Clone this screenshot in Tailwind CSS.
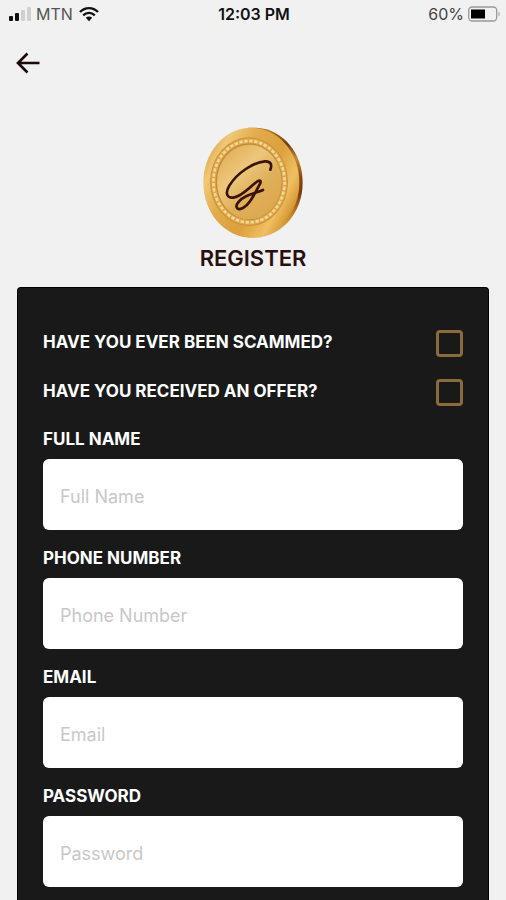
<!DOCTYPE html>
<html lang="en">
<head>
  <meta charset="UTF-8">
  <meta name="viewport" content="width=device-width, initial-scale=1.0">
  <title>Register</title>
  <script src="https://cdn.jsdelivr.net/npm/@tailwindcss/browser@4"></script>
</head>
<body class="bg-[#f1f1f1] min-h-screen flex flex-col font-['Inter',sans-serif] text-[#111111]">
  <!-- Status bar -->
  <div class="grid grid-cols-3 items-center h-7 pl-2 pr-1.5 text-base">
    <div class="flex items-center gap-1 text-[#555555]">
      <svg class="w-6 h-4" viewBox="0 0 24 16" aria-hidden="true">
        <rect x="1" y="10" width="4" height="5" rx="1" fill="#111"/>
        <rect x="7" y="7" width="4" height="8" rx="1" fill="#111"/>
        <rect x="13" y="4" width="4" height="11" rx="1" fill="#d0d0d0"/>
        <rect x="19" y="1" width="4" height="14" rx="1" fill="#d0d0d0"/>
      </svg>
      <span>MTN</span>
      <svg class="w-6 h-4" viewBox="-1 0 22 16" fill="none" stroke="#111" stroke-width="2.4" aria-hidden="true">
        <path d="M1 6C6 .8 14 .8 19 6"/>
        <path d="M4.2 9.4C7.6 6 12.4 6 15.8 9.4"/>
        <path d="M6.8 11.8C8.6 10.1 11.4 10.1 13.2 11.8L10 15.2Z" fill="#111" stroke="none"/>
      </svg>
    </div>
    <div class="text-center font-semibold">12:03 PM</div>
    <div class="flex items-center justify-end gap-1 text-[#444444]">
      <span>60%</span>
      <svg class="w-8 h-4" viewBox="0 0 32 16" aria-hidden="true">
        <rect x=".7" y="1" width="28" height="14" rx="3.5" fill="none" stroke="#999" stroke-width="1.3"/>
        <rect x="3" y="3.5" width="14" height="9" fill="#000"/>
        <path d="M30.5 5.5C32 6.5 32 9.5 30.5 10.5Z" fill="#999"/>
      </svg>
    </div>
  </div>

  <header class="px-4 pt-5">
    <button type="button" aria-label="Back" class="block">
      <svg class="w-6 h-8" viewBox="0 0 24 32" fill="none" stroke="#1a0a0a" stroke-width="2.7">
        <path d="M23.5 15H2M11.5 5.5L2 15L11.5 24.5"/>
      </svg>
    </button>
  </header>

  <!-- Logo -->
  <div class="flex flex-col items-center pt-[47px]">
    <svg class="w-[100px] h-[111px]" viewBox="40 35 300 333" aria-hidden="true">
      <defs>
        <linearGradient id="edge" x1="0" y1="0" x2="0" y2="1">
          <stop offset="0" stop-color="#b9771f"/>
          <stop offset=".15" stop-color="#6e3b10"/>
          <stop offset=".28" stop-color="#c58a34"/>
          <stop offset=".45" stop-color="#8a4a12"/>
          <stop offset=".6" stop-color="#7a3a0c"/>
          <stop offset=".8" stop-color="#c98528"/>
          <stop offset="1" stop-color="#e9bc5c"/>
        </linearGradient>
        <linearGradient id="face" x1="0" y1=".2" x2="1" y2=".8">
          <stop offset="0" stop-color="#d99e3a"/>
          <stop offset=".14" stop-color="#f0c878"/>
          <stop offset=".35" stop-color="#e2ab4c"/>
          <stop offset=".6" stop-color="#dca03c"/>
          <stop offset=".8" stop-color="#efc063"/>
          <stop offset=".9" stop-color="#dc9f3c"/>
          <stop offset="1" stop-color="#a8651b"/>
        </linearGradient>
        <linearGradient id="inner" x1=".1" y1="0" x2=".9" y2="1">
          <stop offset="0" stop-color="#e0ab50"/>
          <stop offset=".35" stop-color="#ecc77c"/>
          <stop offset=".6" stop-color="#dfb05a"/>
          <stop offset="1" stop-color="#dba64a"/>
        </linearGradient>
      </defs>
      <path d="M175 37H200C280 42 339 112 339 202C339 290 278 362 200 367H175Z" fill="url(#edge)"/>
      <ellipse cx="185" cy="202" rx="144" ry="165" fill="url(#face)"/>
      <ellipse cx="178" cy="199" rx="117" ry="133" fill="#d09236"/>
      <ellipse cx="178" cy="199" rx="114" ry="130" fill="#dda64a"/>
      <ellipse cx="178" cy="199" rx="107" ry="122" fill="none" stroke="#f5d894" stroke-width="8" stroke-dasharray="10 5"/>
      <ellipse cx="178" cy="199" rx="100" ry="115" fill="#c78b36"/>
      <ellipse cx="179" cy="200" rx="97" ry="112" fill="url(#inner)"/>
      <path d="M242 163C248 148 243 137 226 138C191 141 143 172 119 211C104 237 114 250 134 246C160 241 182 212 205 197C217 193 213 203 208 211C200 227 189 246 181 258C170 274 153 286 143 279C134 269 151 251 171 242C188 234 205 231 220 224" fill="none" stroke="#3a1208" stroke-width="8" stroke-linecap="round" stroke-linejoin="round"/>
    </svg>
    <h1 class="mt-1 text-[22px] leading-8 font-semibold text-[#2a100d]">REGISTER</h1>
  </div>

  <form class="flex-1 flex flex-col gap-4 mx-[17px] mt-[13px] px-[25px] pt-[42px] pb-3 bg-[#191919] border border-b-0 border-black rounded-t text-[17px] leading-6">
    <div class="flex flex-col gap-[22px] mb-[5px]">
      <div class="flex items-start justify-between">
        <label for="scammed" class="font-bold text-white">HAVE YOU EVER BEEN SCAMMED?</label>
        <input id="scammed" type="checkbox" class="appearance-none size-[27px] border-3 border-[#8c6b3a] rounded-sm checked:bg-[#8c6b3a]">
      </div>
      <div class="flex items-start justify-between">
        <label for="offer" class="font-bold text-white">HAVE YOU RECEIVED AN OFFER?</label>
        <input id="offer" type="checkbox" class="appearance-none size-[27px] border-3 border-[#8c6b3a] rounded-sm checked:bg-[#8c6b3a]">
      </div>
    </div>
    <div class="flex flex-col gap-2">
      <label for="name" class="font-bold text-white">FULL NAME</label>
      <input id="name" type="text" placeholder="Full Name" class="w-full h-[71px] px-[17px] pt-1 bg-white rounded-md text-lg text-black placeholder:text-[#c8c8c8]">
    </div>
    <div class="flex flex-col gap-2">
      <label for="phone" class="font-bold text-white">PHONE NUMBER</label>
      <input id="phone" type="tel" placeholder="Phone Number" class="w-full h-[71px] px-[17px] pt-1 bg-white rounded-md text-lg text-black placeholder:text-[#c8c8c8]">
    </div>
    <div class="flex flex-col gap-2">
      <label for="email" class="font-bold text-white">EMAIL</label>
      <input id="email" type="email" placeholder="Email" class="w-full h-[71px] px-[17px] pt-1 bg-white rounded-md text-lg text-black placeholder:text-[#c8c8c8]">
    </div>
    <div class="flex flex-col gap-2">
      <label for="password" class="font-bold text-white">PASSWORD</label>
      <input id="password" type="password" placeholder="Password" class="w-full h-[71px] px-[17px] pt-1 bg-white rounded-md text-lg text-black placeholder:text-[#c8c8c8]">
    </div>
  </form>
</body>
</html>
